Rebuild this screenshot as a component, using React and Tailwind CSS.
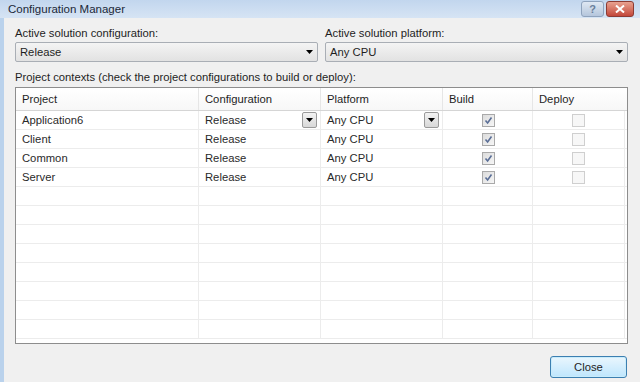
import React from "react";

const rows = [
  { project: "Application6", config: "Release", platform: "Any CPU", active: true },
  { project: "Client", config: "Release", platform: "Any CPU" },
  { project: "Common", config: "Release", platform: "Any CPU" },
  { project: "Server", config: "Release", platform: "Any CPU" },
];

const emptyRows = 8;

const Arrow = () => (
  <svg width="7" height="4" viewBox="0 0 7 4">
    <path d="M0 0 H7 L3.5 4 Z" fill="#000" />
  </svg>
);

const Combo = ({ value }) => (
  <div className="h-[20px] flex items-center justify-between pl-[4px] pr-[4px] border border-[#a9aeb5] rounded-[2px] bg-gradient-to-b from-[#f4f4f4] to-[#e2e2e2] text-[#1e1e1e]">
    <span>{value}</span>
    <Arrow />
  </div>
);

const CellButton = () => (
  <div className="w-[15px] h-[16px] flex items-center justify-center border border-[#9a9a9a] rounded-[2px] bg-gradient-to-b from-[#f3f3f3] to-[#d8d8d8]">
    <Arrow />
  </div>
);

const Check = ({ checked }) =>
  checked ? (
    <div className="w-[13px] h-[13px] flex items-center justify-center border border-[#a9a9a9] bg-gradient-to-br from-[#dcdcdc] to-[#f6f6f6]">
      <svg width="9" height="9" viewBox="0 0 9 9">
        <path d="M1.5 4.5 L3.6 7 L7.5 1.5" fill="none" stroke="#5a6e96" strokeWidth="1.6" />
      </svg>
    </div>
  ) : (
    <div className="w-[13px] h-[13px] border border-[#cfcfcf] bg-[#f7f7f7]" />
  );

const cols = "grid grid-cols-[183px_122px_122px_90px_92px]";

export default function App() {
  return (
    <div
      className="w-[640px] h-[382px] overflow-hidden flex flex-col text-[11.25px] leading-[16px]"
      style={{ fontFamily: '"Liberation Sans", Arial, sans-serif' }}
    >
      {/* Title bar */}
      <div className="h-[18px] flex items-center justify-between pl-[8px] pr-[6px] bg-gradient-to-b from-[#c2d6ee] to-[#d6e4f4]">
        <span className="text-[#1b2838] text-[11.5px]">Configuration Manager</span>
        <div className="flex items-center gap-[2px] self-start pt-[1px]">
          <div className="w-[23px] h-[16px] flex items-center justify-center rounded-[3px] border border-[#8fa3bd] bg-gradient-to-b from-[#dfe8f3] to-[#b5c6dc] text-[#6a7f9c] text-[11px] font-bold leading-none">
            ?
          </div>
          <div className="w-[28px] h-[16px] flex items-center justify-center rounded-[3px] border border-[#8c3b33] bg-gradient-to-b from-[#e8a190] to-[#c2463a]">
            <svg width="10" height="8" viewBox="0 0 10 8">
              <path d="M1 0.5 L9 7.5 M9 0.5 L1 7.5" stroke="#fff" strokeWidth="2" />
            </svg>
          </div>
        </div>
      </div>

      <div className="flex-1 flex">
        <div className="w-[4px] bg-[#bad2ec]" />
        <div className="flex-1 bg-[#f0f0f0] pl-[11px] pr-[12px] pt-[7px] text-[#1e1e1e]">
          <div className="grid grid-cols-2 gap-x-[7px]">
            <div>
              <div className="mb-[1px]">Active solution configuration:</div>
              <Combo value="Release" />
            </div>
            <div>
              <div className="mb-[1px]">Active solution platform:</div>
              <Combo value="Any CPU" />
            </div>
          </div>

          <div className="mt-[7px] mb-[2px]">Project contexts (check the project configurations to build or deploy):</div>

          <div className="h-[257px] border border-[#8d8d8d] bg-white overflow-hidden">
            <div className={`${cols} h-[23px] border-b border-[#d5d5d5] bg-gradient-to-b from-white to-[#f7f7f7]`}>
              {["Project", "Configuration", "Platform", "Build", "Deploy"].map((h, i) => (
                <div
                  key={h}
                  className={`flex items-center pl-[6px] ${i < 4 ? "border-r border-[#e6e6e6]" : ""}`}
                >
                  {h}
                </div>
              ))}
            </div>

            {rows.map((r) => (
              <div key={r.project} className={`${cols} h-[19px] border-b border-[#ececec] text-[#2a2a2a]`}>
                <div className="flex items-center pl-[6px] border-r border-[#ececec]">{r.project}</div>
                <div className="flex items-center justify-between pl-[6px] pr-[3px] border-r border-[#ececec]">
                  <span>{r.config}</span>
                  {r.active && <CellButton />}
                </div>
                <div className="flex items-center justify-between pl-[6px] pr-[3px] border-r border-[#ececec]">
                  <span>{r.platform}</span>
                  {r.active && <CellButton />}
                </div>
                <div className="flex items-center justify-center pl-[2px] border-r border-[#ececec]">
                  <Check checked />
                </div>
                <div className="flex items-center justify-center border-r border-[#ececec]">
                  <Check />
                </div>
              </div>
            ))}

            {Array.from({ length: emptyRows }).map((_, i) => (
              <div key={i} className={`${cols} h-[19px] border-b border-[#ececec]`}>
                <div className="border-r border-[#ececec]" />
                <div className="border-r border-[#ececec]" />
                <div className="border-r border-[#ececec]" />
                <div className="border-r border-[#ececec]" />
                <div className="border-r border-[#ececec]" />
              </div>
            ))}
          </div>

          <div className="flex justify-end mt-[12px] pr-[1px]">
            <button className="w-[77px] h-[22px] rounded-[3px] border border-[#3c7fb1] bg-gradient-to-b from-[#eaf6fd] to-[#bee6fd] shadow-[inset_0_0_0_1px_#c9ecfb] text-[#1e1e1e]">
              Close
            </button>
          </div>
        </div>
      </div>
    </div>
  );
}
